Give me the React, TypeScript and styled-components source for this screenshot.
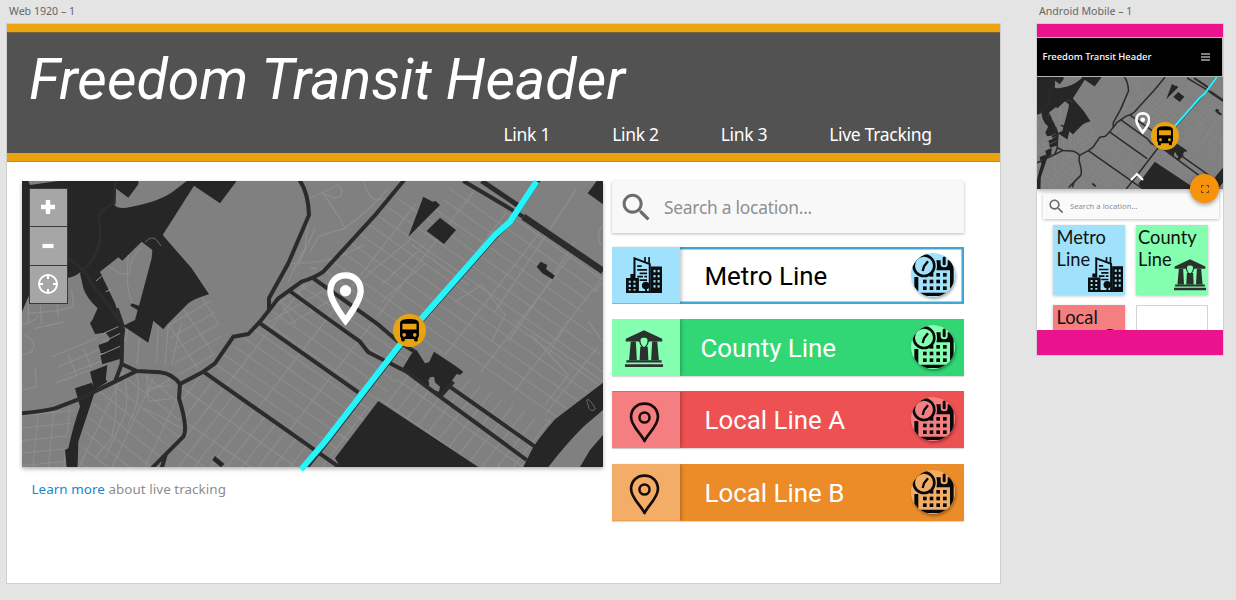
import React from 'react';
import styled, { createGlobalStyle } from 'styled-components';

const Global = createGlobalStyle`
  *, *::before, *::after { box-sizing: border-box; }
  html, body { margin: 0; padding: 0; }
  body { width: 1236px; height: 600px; overflow: hidden; background: #e4e4e4; font-family: 'Noto Sans', sans-serif; }
`;

const Canvas = styled.main`
  display: flex;
  align-items: flex-start;
  gap: 37px;
  height: 600px;
  padding-left: 7px;
`;

const Artboard = styled.section<{ $width: number }>`
  width: ${p => p.$width}px;
  flex: none;
`;

const ArtboardName = styled.div`
  height: 24px;
  padding: 4px 0 0 2px;
  font: 10.6px/15px 'Noto Sans', sans-serif;
  color: #666;
  white-space: nowrap;
`;

const Board = styled.div<{ $height: number }>`
  height: ${p => p.$height}px;
  background: #fff;
  box-shadow: 0 0 0 1px #cfcfcf;
  overflow: hidden;
`;

const Header = styled.header`
  height: 137px;
  border-top: 8px solid #e9a40e;
  border-bottom: 8px solid #e9a40e;
  background: #525252;
  box-shadow: 0 1px 0 #a98d48, inset 0 1px 0 #77613a;
`;

const Title = styled.h1`
  margin: 0;
  padding: 14px 0 0 22px;
  font: italic 400 57.4px/67px Roboto, sans-serif;
  color: #fff;
  white-space: nowrap;
`;

const Nav = styled.nav`
  display: grid;
  grid-template-columns: 108.7px 108.5px 108.5px auto;
  padding: 9px 0 0 496.5px;
`;

const NavLink = styled.a`
  font: 17.5px/24px 'Noto Sans', sans-serif;
  letter-spacing: -0.3px;
  color: #fff;
  white-space: nowrap;
`;

const Content = styled.div`
  display: flex;
  gap: 9px;
  padding: 20px 0 0 15px;
`;

const MapColumn = styled.div`
  width: 581px;
`;

const MapFrame = styled.div<{ $w: number; $h: number }>`
  position: relative;
  width: ${p => p.$w}px;
  height: ${p => p.$h}px;
  box-shadow: 0 2px 4px rgba(0, 0, 0, 0.3);
  > svg { display: block; }
`;

const Controls = styled.div`
  position: absolute;
  left: 6.5px;
  top: 6.5px;
  display: grid;
  gap: 1px;
  padding: 1px;
  background: #3a3a3a;
`;

const ControlButton = styled.button`
  display: grid;
  place-items: center;
  width: 37.5px;
  height: 37.6px;
  padding: 0;
  border: 0;
  background: #a6a6a6;
`;

const Pinned = styled.div<{ $x: number; $y: number }>`
  position: absolute;
  left: ${p => p.$x}px;
  top: ${p => p.$y}px;
  line-height: 0;
`;

const Note = styled.p`
  margin: 0;
  padding: 12px 0 0 9.5px;
  font: 13.4px/20px 'Noto Sans', sans-serif;
  letter-spacing: 0.06px;
  color: #8c8c8c;
  white-space: nowrap;
`;

const NoteLink = styled.a`
  color: #1686cf;
`;

const LineColumn = styled.div`
  width: 352px;
`;

const Search = styled.div`
  display: flex;
  align-items: center;
  height: 52px;
  padding-left: 6px;
  background: #f8f8f8;
  box-shadow: 0 1px 3px rgba(0, 0, 0, 0.28);
  color: #8f8f8f;
  font: 17.4px/26px 'Noto Sans', sans-serif;
  letter-spacing: -0.25px;
  > svg { margin-right: 9px; }
`;

const LineList = styled.div`
  display: grid;
  gap: 15.4px;
  padding-top: 13.6px;
`;

const Line = styled.div<{ $bg: string; $fg: string; $border?: string }>`
  display: flex;
  align-items: center;
  height: 57px;
  background: ${p => p.$bg};
  color: ${p => p.$fg};
  box-shadow: ${p => (p.$border ? `inset 0 0 0 2.5px ${p.$border}` : '0 1px 1px rgba(0,0,0,0.15)')};
`;

const LineIcon = styled.div<{ $bg: string }>`
  display: grid;
  place-items: center;
  flex: none;
  width: 68px;
  height: 57px;
  background: ${p => p.$bg};
  box-shadow: 1px 0 4px rgba(0, 0, 0, 0.3);
  clip-path: inset(0 -6px 0 0);
`;

const LineName = styled.div<{ $indent: number }>`
  flex: 1;
  padding: 1px 0 0 ${p => p.$indent}px;
  font: 25.9px/32px Roboto, sans-serif;
  white-space: nowrap;
`;

const Schedule = styled.div`
  flex: none;
  width: 44px;
  height: 44px;
  margin: 0 9.5px 1px 0;
  border-radius: 50%;
  box-shadow: 1px 2px 3px rgba(0, 0, 0, 0.35);
  > svg { display: block; }
`;

const PhoneBoard = styled(Board)`
  display: flex;
  flex-direction: column;
`;

const PinkBar = styled.div<{ $h: number }>`
  flex: none;
  position: relative;
  height: ${p => p.$h}px;
  background: #ea128d;
`;

const PhoneHeader = styled.div`
  display: flex;
  align-items: center;
  justify-content: space-between;
  flex: none;
  height: 40px;
  padding: 0 12.5px 0 5.5px;
  border: 1px solid #bbb;
  border-left: 0;
  background: #000;
  color: #fff;
  font: 500 9.45px/14px 'Noto Sans', sans-serif;
`;

const PhoneBody = styled.div`
  flex: 1;
  min-height: 0;
  padding: 4px 4px 0 6px;
  overflow: hidden;
`;

const PhoneSearch = styled.div`
  display: flex;
  align-items: center;
  height: 26px;
  padding-left: 4px;
  background: #fafafa;
  box-shadow: 0 1px 3px rgba(0, 0, 0, 0.25);
  color: #8f8f8f;
  font: 7.7px/10px 'Noto Sans', sans-serif;
  > svg { margin-right: 4px; }
`;

const Tiles = styled.div`
  display: grid;
  grid-template-columns: 72px 72px;
  gap: 10px 11px;
  padding: 6px 0 0 10px;
`;

const Tile = styled.div<{ $bg: string; $outlined?: boolean; $indent?: number }>`
  position: relative;
  height: 69.5px;
  padding: 1px 0 0 ${p => p.$indent ?? 3.5}px;
  background: ${p => p.$bg};
  border: ${p => (p.$outlined ? '1.5px solid #d4d4d4' : '0')};
  box-shadow: ${p => (p.$outlined ? 'none' : '0 1px 3px rgba(0,0,0,0.25)')};
  color: #111;
  font: 18.3px/22px Lato, sans-serif;
`;

const Fab = styled.div`
  position: absolute;
  left: 153px;
  top: 97.5px;
  display: grid;
  place-items: center;
  width: 29px;
  height: 29px;
  border-radius: 50%;
  background: #f7920b;
  box-shadow: 0 2px 4px rgba(0, 0, 0, 0.35);
  z-index: 2;
`;

const minor = '#8e8e8e';

function Streets({ id }: { id: string }) {
  const grids = [
    { n: 'a', w: 116, h: 38, m: 'matrix(.82 .57 .61 -.79 885 305)' },
    { n: 'b', w: 38, h: 78, m: 'matrix(.82 .57 .61 -.79 565 590)' },
    { n: 'c', w: 92, h: 42, m: 'matrix(.78 .62 .42 -.9 320 600)' },
    { n: 'd', w: 47, h: 38, m: 'matrix(1 -.1 -.1 1 21 720)' },
    { n: 'e', w: 64, h: 36, m: 'matrix(.86 -.5 .55 .83 460 450)' },
  ];
  return (
    <>
      <defs>
        {grids.map(g => (
          <pattern key={g.n} id={id + g.n} width={g.w} height={g.h} patternUnits="userSpaceOnUse" patternTransform={g.m}>
            <path d={`M0 1.5H${g.w}M1.5 0V${g.h}`} stroke={minor} strokeWidth="3" fill="none" />
          </pattern>
        ))}
      </defs>
      <path fill={`url(#${id}a)`} d="M1165 60 1250 120 1320 18 1764 290 1764 340 1700 390 1764 560V620L1620 735 1345 560 1240 520 885 305Z" />
      <path fill={`url(#${id}a)`} d="M735 445 885 305 1200 510 1170 590 1095 680 940 850 565 590Z" />
      <path fill={`url(#${id}b)`} d="M500 630 565 590 965 880H440L510 790Z" />
      <path fill={`url(#${id}b)`} d="M1170 590 1280 670 1340 600 1560 730 1620 735 1550 830 1530 880H1390L1092 676 960 850 920 830Z" />
      <path fill={`url(#${id}c)`} d="M325 590 480 625 500 780 420 880H190L215 750 245 650Z" />
      <path fill={`url(#${id}d)`} d="M21 720 185 690 150 800 155 880H21Z" />
      <path fill={`url(#${id}e)`} d="M460 450 520 390 582 362 610 440 625 490 580 570 490 600 470 540Z" />
      <path fill={`url(#${id}e)`} d="M745 440 790 380 885 320 960 370 840 450Z" />
      <path
        fill="none"
        stroke={minor}
        strokeWidth="3.5"
        d="M885 70Q950 40 970 30Q995 60 960 70L925 55Q960 110 975 130L990 160Q930 175 910 185L885 230M1045 18Q1060 70 1085 75L1120 70M990 160Q1070 100 1120 40M885 262Q960 260 1045 210M885 280H905M1190 190L1045 310M1230 208 1100 330M1190 210 1360 330M1685 40 1580 200 1440 410M1764 150Q1740 180 1760 215M1680 200 1590 340 1480 500M1790 300 1735 350M1100 380 1230 265M1320 380 1400 330 1470 420 1430 500M1550 480 1660 600 1590 690M1500 435 1680 560 1764 620M1660 435 1600 540M1720 440 1764 500"
      />
      <path
        fill="none"
        stroke={minor}
        strokeWidth="3.5"
        d="M40 380V440M75 375 80 450M125 360 130 430M40 415Q130 410 175 395L170 345M21 450Q60 440 70 420M30 480Q70 500 50 530L21 540M60 460Q110 450 150 440M110 545 245 490M130 575 250 525M150 600 255 560M60 580 65 635 21 645M160 540 185 600M205 520 230 580M120 625 225 585M345 435 330 500M375 480 365 570M430 440 425 560M460 450 450 570M500 440 470 570M300 620Q310 700 290 790L240 850M330 610Q345 700 320 740L270 850M365 600Q385 660 340 750M395 595 400 680 470 670M395 640 470 630M400 650 470 610M390 700 500 760M885 90 870 220Q840 270 820 320M900 160 850 270M885 265Q840 260 820 270"
      />
    </>
  );
}

interface CityMapProps {
  id: string;
  width: number;
  height: number;
  viewBox: string;
}

function CityMap({ id, width, height, viewBox }: CityMapProps) {
  return (
    <svg width={width} height={height} viewBox={viewBox} preserveAspectRatio="none">
      <rect x="21" y="0" width="1743" height="900" fill="#808080" />
      <Streets id={id} />
      <g fill="#262626">
        <path d="M21 0H370V28L340 68 300 38 298 90Q310 105 350 95Q440 78 480 45L515 18V0H670L665 18 615 85 537 32 443 180 530 280 582 358Q540 370 520 385L455 450 445 463 415 437 400 503 328 455 325 535 258 535 250 510 310 490 285 490 272 473 240 477 225 445 232 435 248 400 Q215 370 205 340L195 295 198 290 Q180 305 160 308L40 365 21 410Z" />
        <path d="M225 590 277 570 275 590 272 612 277 620 238 645Z" />
        <path d="M180 640 230 623 242 645 238 655Q205 755 190 800L187 900H157L150 825 160 820Q175 750 195 695Z" />
        <path d="M300 470 330 460 322 550 262 568 256 540 310 522 255 535Z" />
        <path d="M592 855 600 843 628 867 618 877Z" />
        <path d="M1225 65 1253 80 1262 78 1275 90 1180 185Z" />
        <path d="M1275 128 1323 165 1287 207 1235 168Z" />
        <path d="M1745 18 1718 55 1764 88V18Z" />
        <path d="M1565 275 1577 260 1597 270 1593 282 1620 302 1612 313 1582 295Z" />
        <path d="M1090 678 1390 876 1420 900H990L960 850Z" />
        <path d="M1160 585 1190 535 1205 525 1230 565 1242 562 1257 530 1325 575 1345 590 1335 600 1325 597 1275 668Z" />
        <path d="M1764 623 1620 733Q1570 790 1550 825L1525 876H1600Q1650 810 1705 755L1764 705Z" />
        <path d="M1764 780 1725 825 1695 876H1764Z" />
      </g>
      <g fill="#808080">
        <path d="M40 18H130L45 30Z" />
        <path d="M380 200 412 225 410 250 372 392 350 385 346 392 368 405 360 435 325 452 308 410 300 385 255 290 310 247 322 257Z" />
        <path d="M1240 618 1245 607 1257 605 1260 622 1275 635 1272 650 1235 640 1243 628Z" />
      </g>
      <g fill="none" stroke="#909090" strokeWidth="3">
        <path d="M280 275 320 297H342L345 290M340 240Q330 340 352 385M380 215Q345 250 343 290" />
        <path d="M243 318 260 304M272 350 288 344M255 480 310 455M262 502 316 475M255 540 320 512" />
        <path d="M390 202Q410 180 425 195L438 213M1715 675Q1720 668 1735 690L1741 702Q1730 712 1722 700Z" stroke="#6a6a6a" />
      </g>
      <path d="M300 18 298 85Q240 110 255 150Q265 230 205 285L240 340 280 390 320 450M160 250 205 285" fill="none" stroke="#2d2d2d" strokeWidth="8" />
      <g fill="none" stroke="#2b2b2b" strokeWidth="12" strokeLinejoin="round">
        <path d="M850 10Q880 50 882 120L820 265 762 370V405" />
        <path d="M1170 12 1085 115 925 290Q900 308 860 320L790 370 735 440 700 477 655 485 600 565 565 590 495 627Q470 595 435 592L365 588 320 567 322 450 305 400" />
        <path d="M21 715Q90 708 120 700L190 673 300 620 365 588M300 620 320 567" />
        <path d="M495 627 492 670Q520 760 505 785L440 850 410 880M440 880 452 840" />
        <path d="M735 445 885 550 1030 652" />
        <path d="M565 590 885 815 985 885" />
        <path d="M820 345 965 450 1035 500 1060 532 1175 590 1275 665 1535 855" />
        <path d="M895 310 1085 445 1150 500 1200 530M1300 632 1560 815M1275 665 1315 620" />
        <path d="M1345 18 1400 50 1525 125" />
        <path d="M1525 125 1764 288" strokeWidth="20" />
        <path d="M1400 18 1510 92" strokeWidth="15" />
        <path d="M1572 14 1489 140 1444 183 1189 473 935 803 865 890" />
      </g>
    </svg>
  );
}

const RouteOverlay = styled.svg`
  position: absolute;
  left: 0;
  top: 0;
  overflow: visible;
`;

interface RouteProps {
  width: number;
  height: number;
  viewBox: string;
  path: string;
  weight: number;
}

function Route({ width, height, viewBox, path, weight }: RouteProps) {
  return (
    <RouteOverlay width={width} height={height} viewBox={viewBox} preserveAspectRatio="none">
      <path d={path} fill="none" stroke="#24f5fa" strokeWidth={weight} />
    </RouteOverlay>
  );
}

function MapPin({ width, height }: { width: number; height: number }) {
  return (
    <svg width={width} height={height} viewBox="0 0 112 164" preserveAspectRatio="none">
      <path d="M56 10C28 10 10 30 10 57C10 88 56 145 56 145S102 88 102 57C102 30 84 10 56 10Z" fill="none" stroke="#fff" strokeWidth="19" />
      <circle cx="56" cy="56" r="17" fill="#fff" />
    </svg>
  );
}

function BusBadge({ size }: { size: number }) {
  return (
    <svg width={size} height={size} viewBox="0 0 33 33">
      <circle cx="16.5" cy="16.5" r="16.5" fill="#e9a30f" />
      <path
        transform="translate(2.3 2.6) scale(1.18)"
        d="M4 16c0 .88.39 1.67 1 2.22V20c0 .55.45 1 1 1h1c.55 0 1-.45 1-1v-1h8v1c0 .55.45 1 1 1h1c.55 0 1-.45 1-1v-1.78c.61-.55 1-1.34 1-2.22V6c0-3.5-3.58-4-8-4s-8 .5-8 4v10zm3.5 1c-.83 0-1.5-.67-1.5-1.5S6.67 14 7.5 14s1.5.67 1.5 1.5S8.33 17 7.5 17zm9 0c-.83 0-1.5-.67-1.5-1.5s.67-1.5 1.5-1.5 1.5.67 1.5 1.5-.67 1.5-1.5 1.5zm1.5-6H6V6h12v5z"
      />
    </svg>
  );
}

function SearchIcon({ size }: { size: number }) {
  return (
    <svg width={size} height={size} viewBox="0 0 24 24" fill="#6c6c6c">
      <path d="M15.5 14h-.79l-.28-.27C15.41 12.59 16 11.11 16 9.5 16 5.91 13.09 3 9.5 3S3 5.91 3 9.5 5.91 16 9.5 16c1.61 0 3.09-.59 4.23-1.57l.27.28v.79l5 4.99L20.49 19l-4.99-5zm-6 0C7.01 14 5 11.99 5 9.5S7.01 5 9.5 5 14 7.01 14 9.5 11.99 14 9.5 14z" />
    </svg>
  );
}

function CityIcon({ size, bg }: { size: number; bg: string }) {
  const windows: [number, number][] = [];
  [81, 93].forEach(x => [38, 53, 68, 83].forEach(y => windows.push([x, y])));
  return (
    <svg width={size} height={size} viewBox="0 0 106 106">
      <path d="M25 62V4L70 21V104" fill="none" stroke="#0a0f12" strokeWidth="6" />
      <path d="M56 16V0M68 20V0M33 27H46M33 38H62M40 48H62M33 58H50M54 58H62M40 68H62" stroke="#0a0f12" strokeWidth="5" />
      <path d="M0 62H38V106H0ZM73 28H106V106H73Z" fill="#0a0f12" />
      <path d="M36 103H76M59 90V104" stroke="#0a0f12" strokeWidth="6" />
      <circle cx="58" cy="84" r="11" fill="#0a0f12" />
      {windows.map(([x, y]) => (
        <rect key={`${x}-${y}`} x={x} y={y} width="6" height="7" fill={bg} />
      ))}
      <path d="M8 70h6v6H8zM22 70h6v6h-6zM8 82h6v6H8zM22 82h6v6h-6zM8 94h6v5H8zM22 94h6v5h-6z" fill={bg} />
      <path d="M13 50H25V62H13Z" fill="#0a0f12" />
    </svg>
  );
}

function HallIcon({ size, bg }: { size: number; bg: string }) {
  return (
    <svg width={size} height={size} viewBox="0 0 112 110">
      <g fill="#2b322e">
        <path d="M56 0 108 24Q111 26 110 33H2Q1 26 4 24Z" />
        <path d="M17 33H32L35 88H12ZM80 33H95L100 88H77ZM45 48H67L69 88H43Z" />
        <path d="M4 88H108V95H4ZM0 100H112V108H0Z" />
      </g>
      <path d="M56 22Q45 20 45 33L53 45H59L67 33Q67 20 56 22Z" fill={bg} />
      <path d="M43 30Q44 42 52 50V60M69 30Q68 42 60 50V60" stroke="#2b322e" strokeWidth="4" fill="none" />
    </svg>
  );
}

function PinIcon() {
  return (
    <svg width="31" height="41" viewBox="0 0 92 122">
      <path d="M46 5C22 5 6 22 6 45C6 72 36 94 46 116C56 94 86 72 86 45C86 22 70 5 46 5Z" fill="none" stroke="#170c0c" strokeWidth="8" strokeLinejoin="round" />
      <circle cx="46" cy="46" r="15" fill="none" stroke="#170c0c" strokeWidth="7.5" />
    </svg>
  );
}

function ScheduleIcon({ id, bg }: { id: string; bg: string }) {
  const days = [
    [57, 65], [77, 65], [97, 65],
    [37, 85], [57, 85], [77, 85], [97, 85],
    [37, 105], [57, 105], [77, 105], [97, 105],
  ];
  return (
    <svg width="44" height="44" viewBox="0 0 132 132">
      <clipPath id={id}>
        <circle cx="66" cy="66" r="66" />
      </clipPath>
      <g clipPath={`url(#${id})`}>
        <rect width="132" height="132" fill={bg} />
        <path d="M76 22H128V116H117V52H76ZM10 72H22V116H10ZM28 119H106V129H28Z" fill="#07090a" />
        <rect x="92" y="8" width="15" height="32" rx="7" fill="#07090a" stroke={bg} strokeWidth="6" />
        <circle cx="39" cy="38" r="39" fill={bg} />
        <circle cx="39" cy="38" r="31" fill={bg} stroke="#07090a" strokeWidth="8" />
        <path d="M51 25 39 40 35 54" stroke="#07090a" strokeWidth="7" fill="none" />
        {days.map(([x, y]) => (
          <rect key={`${x}-${y}`} x={x - 1} y={y - 5} width="11" height="11" fill="#07090a" />
        ))}
      </g>
    </svg>
  );
}

const lines = [
  { name: 'Metro Line', bg: '#ffffff', light: '#a0e1fc', fg: '#000', border: '#3ba9d3', indent: 24.5, kind: 'city' },
  { name: 'County Line', bg: '#31d775', light: '#84ffb0', fg: '#fff', indent: 20.5, kind: 'hall' },
  { name: 'Local Line A', bg: '#ed5151', light: '#f57f80', fg: '#fff', indent: 24.5, kind: 'pin' },
  { name: 'Local Line B', bg: '#eb8c29', light: '#f3ad67', fg: '#fff', indent: 24.5, kind: 'pin' },
];

function Glyph({ kind, bg }: { kind: string; bg: string }) {
  if (kind === 'city') return <CityIcon size={36} bg={bg} />;
  if (kind === 'hall') return <HallIcon size={38} bg={bg} />;
  return <PinIcon />;
}

const GlyphSlot = styled.div<{ $x: number; $y: number }>`
  margin: ${p => p.$y}px 0 0 ${p => p.$x}px;
  line-height: 0;
`;

const webView = '21 18 1743 858';
const phoneView = '160 10 1468 886';

export default function App() {
  return (
    <>
      <Global />
      <Canvas>
        <Artboard $width={993}>
          <ArtboardName>Web 1920 – 1</ArtboardName>
          <Board $height={559}>
            <Header>
              <Title>Freedom Transit Header</Title>
              <Nav>
                <NavLink>Link 1</NavLink>
                <NavLink>Link 2</NavLink>
                <NavLink>Link 3</NavLink>
                <NavLink>Live Tracking</NavLink>
              </Nav>
            </Header>
            <Content>
              <MapColumn>
                <MapFrame $w={581} $h={286}>
                  <CityMap id="web" width={581} height={286} viewBox={webView} />
                  <Route width={581} height={286} viewBox={webView} weight={18} path="M1565 19 1485 140 1440 180 1185 470 930 800 858 884" />
                  <Controls>
                    <ControlButton>
                      <svg width="16" height="16"><path d="M8 1V15M1 8H15" stroke="#fff" strokeWidth="4.4" /></svg>
                    </ControlButton>
                    <ControlButton>
                      <svg width="16" height="16"><path d="M2.5 8H13.5" stroke="#fff" strokeWidth="4.2" /></svg>
                    </ControlButton>
                    <ControlButton>
                      <svg width="22" height="22" fill="none" stroke="#fff">
                        <circle cx="11" cy="11" r="9" strokeWidth="2" />
                        <path d="M11 2V6M11 16V20M2 11H6M16 11H20" strokeWidth="2" />
                      </svg>
                    </ControlButton>
                  </Controls>
                  <Pinned $x={305} $y={91}><MapPin width={37} height={55} /></Pinned>
                  <Pinned $x={371} $y={133}><BusBadge size={33} /></Pinned>
                </MapFrame>
                <Note><NoteLink>Learn more</NoteLink> about live tracking</Note>
              </MapColumn>
              <LineColumn>
                <Search><SearchIcon size={37} />Search a location...</Search>
                <LineList>
                  {lines.map((l, i) => (
                    <Line key={l.name} $bg={l.bg} $fg={l.fg} $border={l.border}>
                      <LineIcon $bg={l.light}>
                        <GlyphSlot $x={l.kind === 'pin' ? -4 : -5} $y={l.kind === 'hall' ? 4 : l.kind === 'pin' ? 5 : 0}>
                          <Glyph kind={l.kind} bg={l.light} />
                        </GlyphSlot>
                      </LineIcon>
                      <LineName $indent={l.indent}>{l.name}</LineName>
                      <Schedule><ScheduleIcon id={`schedule-${i}`} bg={l.light} /></Schedule>
                    </Line>
                  ))}
                </LineList>
              </LineColumn>
            </Content>
          </Board>
        </Artboard>

        <Artboard $width={186}>
          <ArtboardName>Android Mobile – 1</ArtboardName>
          <PhoneBoard $height={331}>
            <PinkBar $h={12.5} />
            <PhoneHeader>
              Freedom Transit Header
              <svg width="9" height="8"><path d="M0 1H9M0 4H9M0 7H9" stroke="#fff" /></svg>
            </PhoneHeader>
            <MapFrame $w={186} $h={112.5}>
              <CityMap id="phone" width={186} height={112.5} viewBox={phoneView} />
              <Route width={186} height={112.5} viewBox={phoneView} weight={16} path="M1578 10 1485 140 1440 180 1185 470" />
              <Pinned $x={97.5} $y={35.5}><MapPin width={15.5} height={23} /></Pinned>
              <Pinned $x={114} $y={45.5}><BusBadge size={28} /></Pinned>
              <Pinned $x={93} $y={95}>
                <svg width="14" height="9"><path d="M1 8 7 2 13 8" fill="none" stroke="#fff" strokeWidth="2.2" /></svg>
              </Pinned>
              <Fab>
                <svg width="10" height="10" fill="none" stroke="#5a3d10" strokeWidth="1">
                  <path d="M1.5 3.5V1.5H3.5M6.5 1.5H8.5V3.5M8.5 6.5V8.5H6.5M3.5 8.5H1.5V6.5" />
                </svg>
              </Fab>
            </MapFrame>
            <PhoneBody>
              <PhoneSearch><SearchIcon size={19} />Search a location...</PhoneSearch>
              <Tiles>
                <Tile $bg="#a0e1fc">Metro<br />Line
                  <Pinned $x={35} $y={32}><CityIcon size={35} bg="#a0e1fc" /></Pinned>
                </Tile>
                <Tile $bg="#84ffb0" $indent={2}>County<br />Line
                  <Pinned $x={38} $y={34}><HallIcon size={32} bg="#84ffb0" /></Pinned>
                </Tile>
                <Tile $bg="#f57f80">Local
                  <Pinned $x={49} $y={24}>
                    <svg width="16" height="20"><circle cx="8" cy="8" r="7" fill="none" stroke="#170c0c" strokeWidth="2" /></svg>
                  </Pinned>
                </Tile>
                <Tile $bg="#fff" $outlined />
              </Tiles>
            </PhoneBody>
            <PinkBar $h={25} />
          </PhoneBoard>
        </Artboard>
      </Canvas>
    </>
  );
}
